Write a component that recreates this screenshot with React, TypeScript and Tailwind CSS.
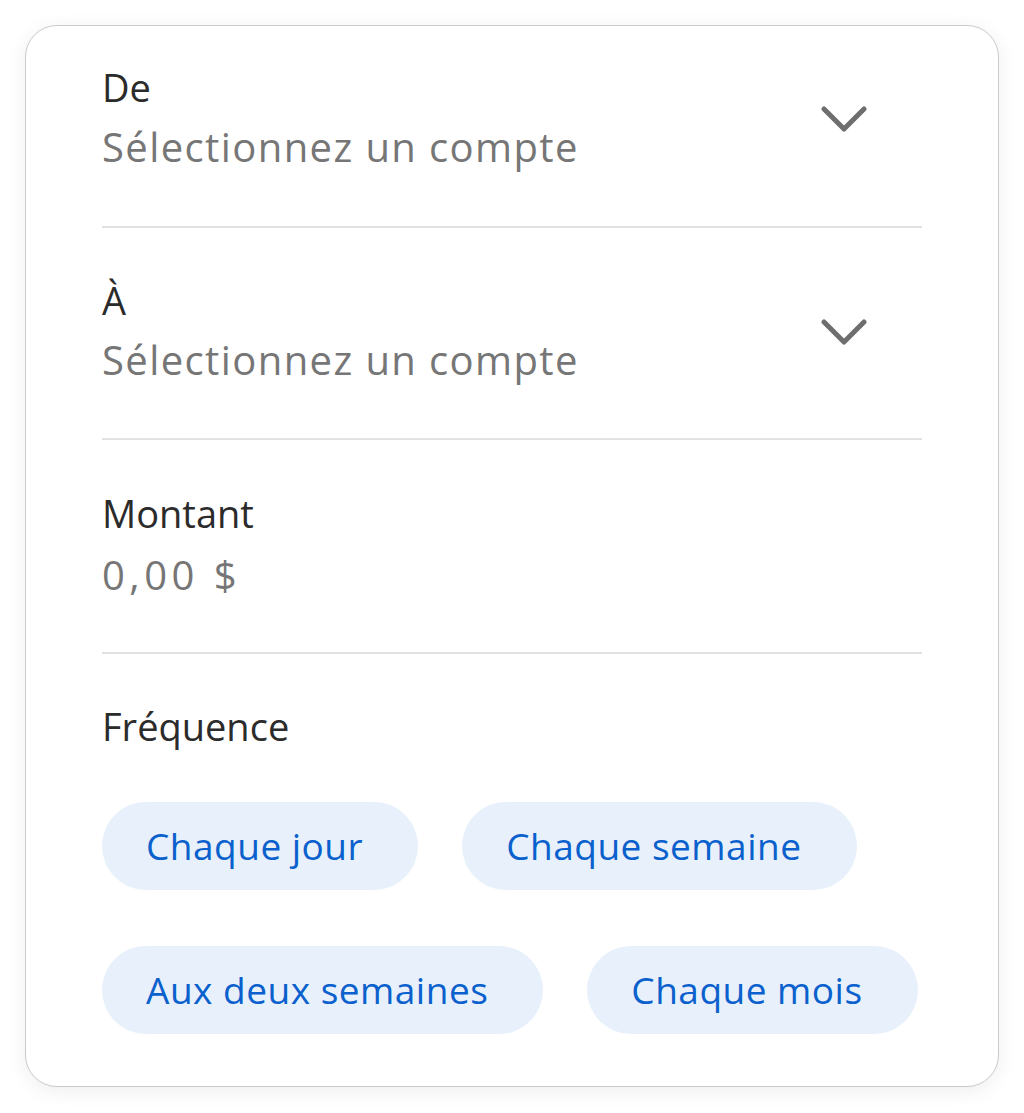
const font = { fontFamily: '"Open Sans", "Noto Sans", sans-serif' }

function Chevron() {
  return (
    <svg width="46" height="26" viewBox="0 0 46 26" fill="none" className="mr-[55px] shrink-0">
      <polyline points="3,3 23,23 43,3" stroke="#6e6e6e" strokeWidth="5" strokeLinecap="round" strokeLinejoin="round" />
    </svg>
  )
}

function Picker({ label, value, first }: { label: string; value: string; first?: boolean }) {
  return (
    <div className={`flex items-center border-b-2 border-[#e2e2e2] ${first ? 'pt-[39px] pb-[53px]' : 'pt-[50px] pb-[52px]'}`}>
      <div className="flex-1 flex flex-col">
        <span className="text-[38px] leading-[44px] text-[#2b2b2b]">{label}</span>
        <span className="text-[40px] leading-[52px] tracking-[1.4px] text-[#767676] mt-[12px]">{value}</span>
      </div>
      <Chevron />
    </div>
  )
}

const freqs = ['Chaque jour', 'Chaque semaine', 'Aux deux semaines', 'Chaque mois']

export default function App() {
  return (
    <div className="min-h-screen bg-white p-[25px]" style={font}>
      <div className="w-[974px] rounded-[32px] border border-[#cbcbcb] bg-white shadow-[0_4px_20px_rgba(0,0,0,0.07)] px-[76px] pb-[52px]">
        <Picker first label="De" value="Sélectionnez un compte" />
        <Picker label="À" value="Sélectionnez un compte" />
        <div className="flex flex-col border-b-2 border-[#e2e2e2] pt-[51px] pb-[51px]">
          <span className="text-[38px] leading-[44px] text-[#2b2b2b]">Montant</span>
          <span className="text-[40px] leading-[52px] tracking-[4.5px] text-[#767676] mt-[14px]">0,00 $</span>
        </div>
        <div className="pt-[50px]">
          <div className="text-[38px] leading-[44px] text-[#2b2b2b]">Fréquence</div>
          <div className="flex flex-wrap gap-x-[44px] gap-y-[56px] mt-[54px]">
            {freqs.map((f) => (
              <button
                key={f}
                className="h-[88px] pl-[44px] pr-[55px] rounded-full bg-[#e8f1fb] text-[#0a60cc] text-[37px] leading-[44px] tracking-[0.5px]"
              >
                {f}
              </button>
            ))}
          </div>
        </div>
      </div>
    </div>
  )
}
